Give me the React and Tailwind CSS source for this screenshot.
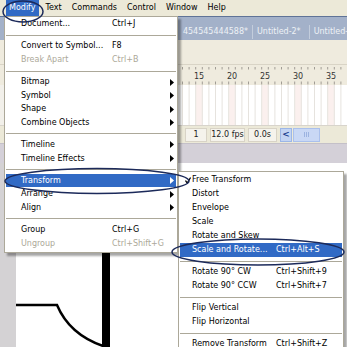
import React from 'react';

function Tri({ white }) {
  return (
    <svg width="4" height="7" viewBox="0 0 4 7" className="block">
      <path d="M0 0L4 3.5L0 7Z" fill={white ? '#ffffff' : '#000000'} />
    </svg>
  );
}

const mainMenu = [
  { l: 'Document...', s: 'Ctrl+J' },
  'sep',
  { l: 'Convert to Symbol...', s: 'F8' },
  { l: 'Break Apart', s: 'Ctrl+B', d: true },
  'sep',
  { l: 'Bitmap', a: true },
  { l: 'Symbol', a: true },
  { l: 'Shape', a: true },
  { l: 'Combine Objects', a: true },
  'sep',
  { l: 'Timeline', a: true },
  { l: 'Timeline Effects', a: true },
  'sep',
  { l: 'Transform', a: true, h: true },
  { l: 'Arrange', a: true },
  { l: 'Align', a: true },
  'sep',
  { l: 'Group', s: 'Ctrl+G' },
  { l: 'Ungroup', s: 'Ctrl+Shift+G', d: true },
];

const subMenu = [
  { l: 'Free Transform', c: true },
  { l: 'Distort' },
  { l: 'Envelope' },
  { l: 'Scale' },
  { l: 'Rotate and Skew' },
  { l: 'Scale and Rotate...', s: 'Ctrl+Alt+S', h: true },
  'sep',
  { l: 'Rotate 90\u00b0 CW', s: 'Ctrl+Shift+9' },
  { l: 'Rotate 90\u00b0 CCW', s: 'Ctrl+Shift+7' },
  'sep',
  { l: 'Flip Vertical' },
  { l: 'Flip Horizontal' },
  'sep',
  { l: 'Remove Transform', s: 'Ctrl+Shift+Z' },
];

const edges = Array.from({ length: 38 }, (_, k) => 103.3 + k * 6.6);
const frames = Array.from({ length: 37 }, (_, k) => k + 1);

function Ruler() {
  return (
    <svg width="347" height="20" className="block">
      {edges.map((x, i) => (
        <g key={i}>
          <line x1={x} y1="2" x2={x} y2="4.5" stroke="#a09c94" strokeWidth="1" />
          <line x1={x} y1="16.5" x2={x} y2="19.5" stroke="#a09c94" strokeWidth="1" />
        </g>
      ))}
      {[5, 10, 15, 20, 25, 30, 35].map((n) => (
        <text
          key={n}
          x={103.3 + (n - 1) * 6.6 + 3.3}
          y="13.5"
          textAnchor="middle"
          fontFamily="DejaVu Sans, sans-serif"
          fontSize="8"
          fill="#333333"
        >
          {n}
        </text>
      ))}
    </svg>
  );
}

function FrameGrid() {
  return (
    <svg width="347" height="41" className="block">
      <rect x="0" y="0" width="103" height="41" fill="#f2f0ea" />
      {frames
        .filter((n) => n % 5 === 0)
        .map((n) => (
          <rect key={n} x={103.3 + (n - 1) * 6.6} y="0" width="6.6" height="41" fill="#fbf0ee" />
        ))}
      {edges.map((x, i) => (
        <line key={i} x1={x} y1="0" x2={x} y2="41" stroke="#e6e3de" strokeWidth="1" />
      ))}
      <line x1="0" y1="40.5" x2="347" y2="40.5" stroke="#d8d4cc" strokeWidth="1" />
    </svg>
  );
}

export default function App() {
  return (
    <div className="relative w-[347px] h-[347px] overflow-hidden bg-white font-['DejaVu_Sans',sans-serif] text-[8px] leading-none text-black">
      <div className="flex flex-col h-full">
        {/* menu bar */}
        <div className="h-[16px] shrink-0 bg-[#ece9d8] flex items-stretch pl-[6px] gap-[4px]">
          <div className="px-[3px] flex items-center bg-[#316ac5] text-white">Modify</div>
          <div className="px-[3px] flex items-center">Text</div>
          <div className="px-[3px] flex items-center">Commands</div>
          <div className="px-[3px] flex items-center">Control</div>
          <div className="px-[3px] flex items-center">Window</div>
          <div className="px-[3px] flex items-center">Help</div>
        </div>
        {/* document tabs */}
        <div className="h-[24px] shrink-0 bg-[#a3b1c9] border-t border-[#5f7397] flex items-center pt-[6px] text-[#eef1f6]">
          <div className="w-[253px] shrink-0 overflow-hidden whitespace-nowrap flex justify-end pr-[4px] border-r border-[#c3cddc] h-[14px] items-center">
            454545444588*
          </div>
          <div className="pl-[4px] pr-[8px] border-r border-[#c3cddc] h-[14px] flex items-center whitespace-nowrap">
            Untitled-2*
          </div>
          <div className="pl-[4px] h-[14px] flex items-center whitespace-nowrap">Untitled-</div>
        </div>
        {/* edit bar */}
        <div className="h-[25px] shrink-0 bg-[#efebde] border-b border-[#d9d4c6]" />
        {/* ruler */}
        <div className="h-[20px] shrink-0 bg-[#efebde]">
          <Ruler />
        </div>
        {/* frames */}
        <div className="h-[41px] shrink-0 bg-white">
          <FrameGrid />
        </div>
        {/* status */}
        <div className="h-[17px] shrink-0 bg-[#ece9d8] flex items-center pl-[185px] gap-[3px] text-[#222]">
          <div className="w-[22px] h-[14px] bg-[#f5f3ec] border border-[#d8d3c6] flex items-center justify-center">1</div>
          <div className="w-[35px] h-[14px] bg-[#f5f3ec] border border-[#d8d3c6] flex items-center justify-center">12.0 fps</div>
          <div className="w-[29px] h-[14px] bg-[#f5f3ec] border border-[#d8d3c6] flex items-center justify-center">0.0s</div>
          <div className="flex gap-[1px]">
            <div className="w-[12px] h-[14px] bg-[#c3d4f3] border border-[#9cb6e6] flex items-center justify-center text-[#1b3f8f] font-bold text-[9px]">&lt;</div>
            <div className="w-[27px] h-[14px] bg-[#c9d8f5] border border-[#aac0ec] flex items-center justify-center gap-[1px]">
              <div className="w-px h-[5px] bg-[#9cb3e0]" />
              <div className="w-px h-[5px] bg-[#9cb3e0]" />
              <div className="w-px h-[5px] bg-[#9cb3e0]" />
            </div>
          </div>
        </div>
        {/* gray band */}
        <div className="h-[20px] shrink-0 bg-[#d4d0d8] border-t border-[#c4c0c8]" />
        {/* stage */}
        <div className="flex-1 flex">
          <div className="w-[16px] bg-[#d4d2d4]" />
          <div className="flex-1 bg-white">
            <svg width="331" height="184" className="block">
              <rect x="86" y="0" width="8" height="184" fill="#000" />
              <path d="M0 142 H41 C49 161 64 175 87 183" fill="none" stroke="#000" strokeWidth="2.5" />
            </svg>
          </div>
        </div>
      </div>

      {/* Modify dropdown */}
      <div className="absolute left-[4px] top-[16px] w-[174px] bg-white border border-[#aca899] pt-[0.5px] pb-[2px] px-[1px] shadow-[3px_3px_2px_rgba(0,0,0,0.35)]">
        {mainMenu.map((it, i) =>
          it === 'sep' ? (
            <div key={i} className="h-[8.5px] flex items-center">
              <div className="h-px w-full bg-[#aca899]" />
            </div>
          ) : (
            <div
              key={i}
              className={`h-[13.6px] flex items-center pl-[15px] pr-[2px] whitespace-nowrap ${
                it.h ? 'bg-[#316ac5] text-white' : it.d ? 'text-[#aca899]' : 'text-black'
              }`}
            >
              <span className="w-[91px] shrink-0">{it.l}</span>
              <span className="flex-1">{it.s || ''}</span>
              {it.a && <Tri white={it.h} />}
            </div>
          )
        )}
      </div>

      {/* Transform submenu */}
      <div className="absolute left-[178px] top-[171px] w-[166px] bg-white border border-[#aca899] pt-[1px] px-[1px] shadow-[3px_3px_2px_rgba(0,0,0,0.35)]">
        {subMenu.map((it, i) =>
          it === 'sep' ? (
            <div key={i} className="h-[8px] flex items-center">
              <div className="h-px w-full bg-[#aca899]" />
            </div>
          ) : (
            <div
              key={i}
              className={`h-[14px] flex items-center pl-[5px] whitespace-nowrap ${
                it.h ? 'bg-[#316ac5] text-white' : 'text-black'
              }`}
            >
              <span className="w-[7px] shrink-0 flex items-center">
                {it.c && (
                  <svg width="6" height="7" viewBox="0 0 6 7" className="block">
                    <path d="M0.5 3.5 L2.2 6 L5.6 0.5" fill="none" stroke="#000" strokeWidth="1.3" />
                  </svg>
                )}
              </span>
              <span className="w-[84px] shrink-0">{it.l}</span>
              <span>{it.s || ''}</span>
            </div>
          )
        )}
      </div>

      {/* annotation ellipses */}
      <svg width="347" height="347" className="absolute left-0 top-0 pointer-events-none">
        <ellipse cx="23" cy="11.5" rx="20" ry="10.5" fill="none" stroke="#1c2a5a" strokeWidth="1.5" />
        <ellipse cx="97" cy="181" rx="92" ry="12.5" fill="none" stroke="#1c2a5a" strokeWidth="1.5" />
        <ellipse cx="258" cy="252" rx="86" ry="13" fill="none" stroke="#1c2a5a" strokeWidth="1.5" />
      </svg>
    </div>
  );
}
